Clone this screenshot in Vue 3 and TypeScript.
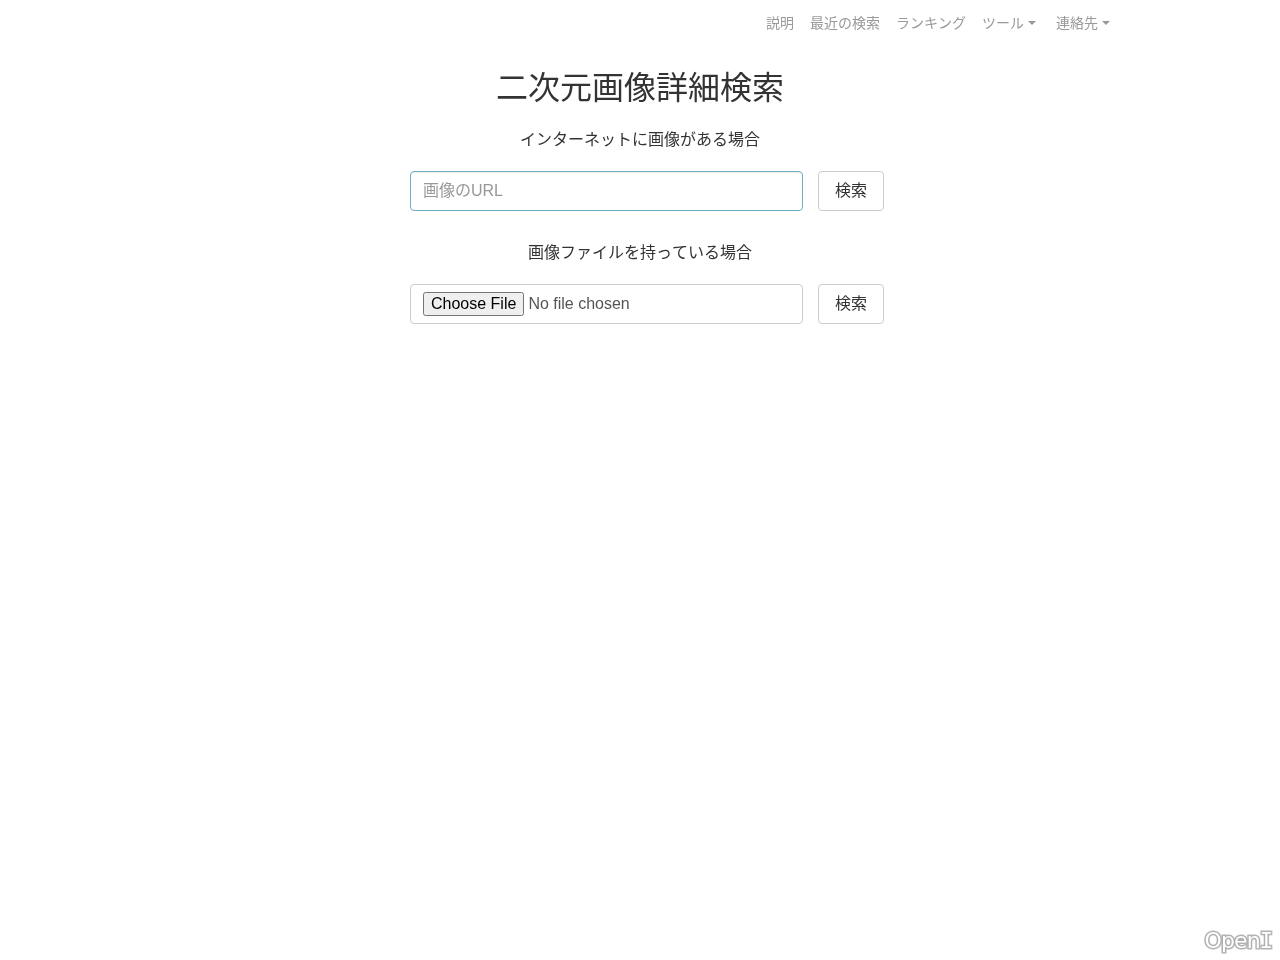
<script setup lang="ts">
interface NavItem { label: string; caret: boolean }
const navItems: NavItem[] = [
  { label: '説明', caret: false },
  { label: '最近の検索', caret: false },
  { label: 'ランキング', caret: false },
  { label: 'ツール', caret: true },
  { label: '連絡先', caret: true },
]
</script>

<template>
  <div class="page" lang="ja">
    <nav class="nav">
      <a v-for="item in navItems" :key="item.label" class="nav-link" :class="{ drop: item.caret }" href="#">
        <span class="nav-label">{{ item.label }}</span><span v-if="item.caret" class="caret"></span>
      </a>
    </nav>
    <main class="main">
      <h1 class="title">二次元画像詳細検索</h1>
      <p class="lead first">インターネットに画像がある場合</p>
      <form class="row" @submit.prevent>
        <input class="control focus" type="text" placeholder="画像のURL" />
        <button class="btn" type="submit">検索</button>
      </form>
      <p class="lead second">画像ファイルを持っている場合</p>
      <form class="row" @submit.prevent>
        <input class="control file" type="file" />
        <button class="btn" type="submit">検索</button>
      </form>
    </main>
    <div class="mark">Open<span class="mark-i">I</span></div>
  </div>
</template>

<style>
html, body { margin: 0; background: #fff; }
</style>

<style scoped>
.page {
  position: relative;
  height: 960px;
  overflow: hidden;
  font-family: "Liberation Sans", "Noto Sans CJK JP", sans-serif;
  font-kerning: none;
  color: #333;
  font-size: 14px;
  line-height: 20px;
  will-change: transform;
}
.nav {
  display: flex;
  justify-content: flex-end;
  padding: 13px 162px 0 0;
  height: 20px;
}
.nav-link {
  display: flex;
  align-items: center;
  padding: 0 8px;
  color: #999;
  text-decoration: none;
  white-space: nowrap;
}
.nav-label {
  display: inline-block;
}
.nav-link.drop { padding-right: 12px; }
.nav-link:last-child { padding-right: 8px; }
.caret {
  display: inline-block;
  width: 0;
  height: 0;
  margin-left: 4px;
  border-top: 4px solid #999;
  border-left: 4px solid transparent;
  border-right: 4px solid transparent;
}
.main {
  display: flex;
  flex-direction: column;
  align-items: center;
  padding-top: 33px;
}
.title {
  margin: 0;
  font-size: 32px;
  line-height: 44px;
  font-weight: 400;
}
.lead {
  margin: 0;
  font-size: 16px;
  line-height: 22px;
}
.first { margin-top: 19px; }
.second { margin-top: 31px; }
.row {
  display: flex;
  gap: 15px;
  width: 474px;
  margin: 20px 0 0 14px;
}
.control {
  box-sizing: border-box;
  flex: 0 0 393px;
  width: 393px;
  height: 40px;
  padding: 6px 12px;
  font: inherit;
  font-size: 16px;
  line-height: 24px;
  color: #555;
  background: #fff;
  border: 1px solid #ccc;
  border-radius: 4px;
  outline: none;
}
.file { padding-top: 7px; }
.control::placeholder { color: #999; opacity: 1; }
.focus {
  border-color: #6fadc2;
  box-shadow: inset 0 1px 1px rgba(0, 0, 0, .075);
}
.btn {
  box-sizing: border-box;
  width: 66px;
  height: 40px;
  padding: 6px 16px;
  font: inherit;
  font-size: 16px;
  line-height: 24px;
  color: #333;
  background: #fff;
  border: 1px solid #ccc;
  border-radius: 4px;
}
.mark {
  position: absolute;
  right: 7px;
  bottom: 4px;
  font-size: 22px;
  line-height: 30px;
  letter-spacing: -0.9px;
  font-family: "DejaVu Sans", sans-serif;
  color: #fff;
  -webkit-text-stroke: 3px #bbb;
  paint-order: stroke fill;
  text-shadow: 0 0 3px rgba(0, 0, 0, .2);
}
.mark-i {
  font-family: "DejaVu Sans Mono", monospace;
  letter-spacing: 0;
}
</style>
